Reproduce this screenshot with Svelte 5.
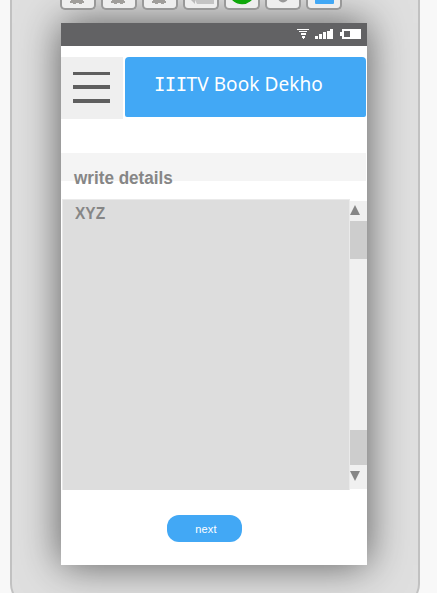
<script>
  const tools = ['lock', 'lock', 'lock', 'back', 'green', 'knob', 'blue'];
</script>

<div class="page">
  <div class="device">
    <div class="tools">
      {#each tools as kind}
        <div class="tool">
          <svg width="32" height="8" viewBox="0 0 32 8">
            {#if kind === 'lock'}
              <path d="M9 0h12v1h1v2h-2v1h-3V3h-3v1h-3V3H8V1h1z" fill="#a09e9b" />
            {:else if kind === 'back'}
              <path d="M6 0h4v4z" fill="#bbb" /><path d="M12 0h17v4H12l-2-4z" fill="#c4c4c4" />
            {:else if kind === 'green'}
              <ellipse cx="16" cy="-6" rx="12" ry="10.3" fill="#0fa80b" />
            {:else if kind === 'knob'}
              <circle cx="16" cy="-2.5" r="5" fill="#999" />
            {:else}
              <rect x="7" y="-8" width="19" height="12" rx="1" fill="#42a8f5" />
            {/if}
          </svg>
        </div>
      {/each}
    </div>
    <main class="screen">
      <div class="status">
        <svg width="66" height="12" viewBox="0 0 66 12" shape-rendering="crispEdges" fill="#fff">
          <path d="M0 1h12v1H0zM2 3h8v1H2zM4 5h5v2H4zM5 8h3v2H5zM6 10h1v1H6z" />
          <path d="M18 8h3v3h-3zM22 6h3v5h-3zM26 4h3v7h-3zM30 3h3v8h-3zM33 1h3v10h-3z" />
          <path fill-rule="evenodd" d="M45 1h19v10H45V8h-2V4h2zM47 3v6h6V3z" />
        </svg>
      </div>
      <header>
        <div class="menu"><i></i><i></i><i></i></div>
        <h1><span>III</span><b>TV Book Dekho</b></h1>
      </header>
      <div class="label"><span>write details</span></div>
      <section>
        <div class="area"><span>XYZ</span></div>
        <div class="scroll">
          <svg class="up" width="10" height="10"><path d="M5 0l5 10H0z" fill="#868686" /></svg>
          <div class="thumb top"></div>
          <div class="thumb bottom"></div>
          <svg class="down" width="10" height="10"><path d="M0 0h10L5 10z" fill="#868686" /></svg>
        </div>
      </section>
      <button>next</button>
    </main>
  </div>
</div>

<style>
  .page { width: 437px; height: 593px; overflow: hidden; background: #f8f8f8; padding-left: 10px; box-sizing: border-box; font-family: "Liberation Sans", Arial, sans-serif; }
  .device { width: 410px; height: 606px; box-sizing: border-box; border: 2px solid #c1c1c1; border-top: 0; border-radius: 0 0 22px 22px; background: #dfdfdf; padding-left: 49px; overflow: hidden; }
  .tools { display: flex; gap: 5px; height: 23px; margin-left: -1px; position: relative; z-index: 1; }
  .tool { width: 36px; height: 10px; box-sizing: border-box; border: 2px solid #999; border-top: 0; border-radius: 0 0 5px 5px; background: #eee; overflow: hidden; }
  .tool svg { display: block; }
  .screen { width: 306px; height: 542px; background: #fff; box-shadow: 0 0 38px rgba(0, 0, 0, .6); }
  .status { height: 23px; background: #626264; display: flex; justify-content: flex-end; }
  .status svg { margin: 5px 4px 0 0; }
  header { display: flex; gap: 2px; padding-top: 11px; }
  .menu { width: 62px; height: 62px; box-sizing: border-box; background: #efefef; padding: 15px 13px 0 12px; }
  .menu i { display: block; height: 4px; margin-bottom: 9px; background: #5f5f5f; }
  .menu i:first-child { height: 3px; margin-bottom: 10px; }
  .menu i:nth-child(2) { margin-bottom: 10px; }
  h1 { margin: 0; width: 241px; height: 60px; box-sizing: border-box; border-radius: 4px 4px 2px 2px; background: #42a8f5; color: #fff; font-size: 19px; line-height: 54px; font-weight: 400; padding-left: 29px; white-space: nowrap; }
  h1 span { font-family: "DejaVu Sans Mono", monospace; font-size: 19px; letter-spacing: -.6px; }
  h1 b { font-family: "Noto Sans", sans-serif; font-weight: 400; letter-spacing: .08px; }
  .label { width: 305px; height: 28px; margin-top: 34px; background: #f4f4f4; color: #868686; font-size: 18px; font-weight: 700; line-height: 50px; padding-left: 13px; box-sizing: border-box; white-space: nowrap; }
  .label span { display: inline-block; transform: scaleX(.95); transform-origin: 0 0; }
  section { display: flex; margin-top: 18px; padding-left: 1px; }
  .area { width: 288px; height: 291px; box-sizing: border-box; border: 1px solid #eaeaea; border-bottom: 0; background: #ddd; color: #868686; font-size: 17px; font-weight: 700; line-height: 18px; padding: 5px 0 0 12px; }
  .area span { display: inline-block; transform: scaleX(.91); transform-origin: 0 0; }
  .scroll { width: 17px; height: 288px; margin-top: 2px; background: #f0f0f0; display: flex; flex-direction: column; }
  .up { margin-top: 4px; flex: none; }
  .thumb { background: #cdcdcd; }
  .top { height: 38px; margin-top: 6px; }
  .bottom { height: 35px; margin-top: 171px; }
  .down { margin-top: 6px; flex: none; }
  button { display: block; width: 75px; height: 27px; margin: 25px 0 0 106px; padding: 1px 0 0 3px; border: 0; border-radius: 12px; background: #42a8f5; color: #fff; font: 11px "Liberation Sans", Arial, sans-serif; letter-spacing: .2px; }
</style>
